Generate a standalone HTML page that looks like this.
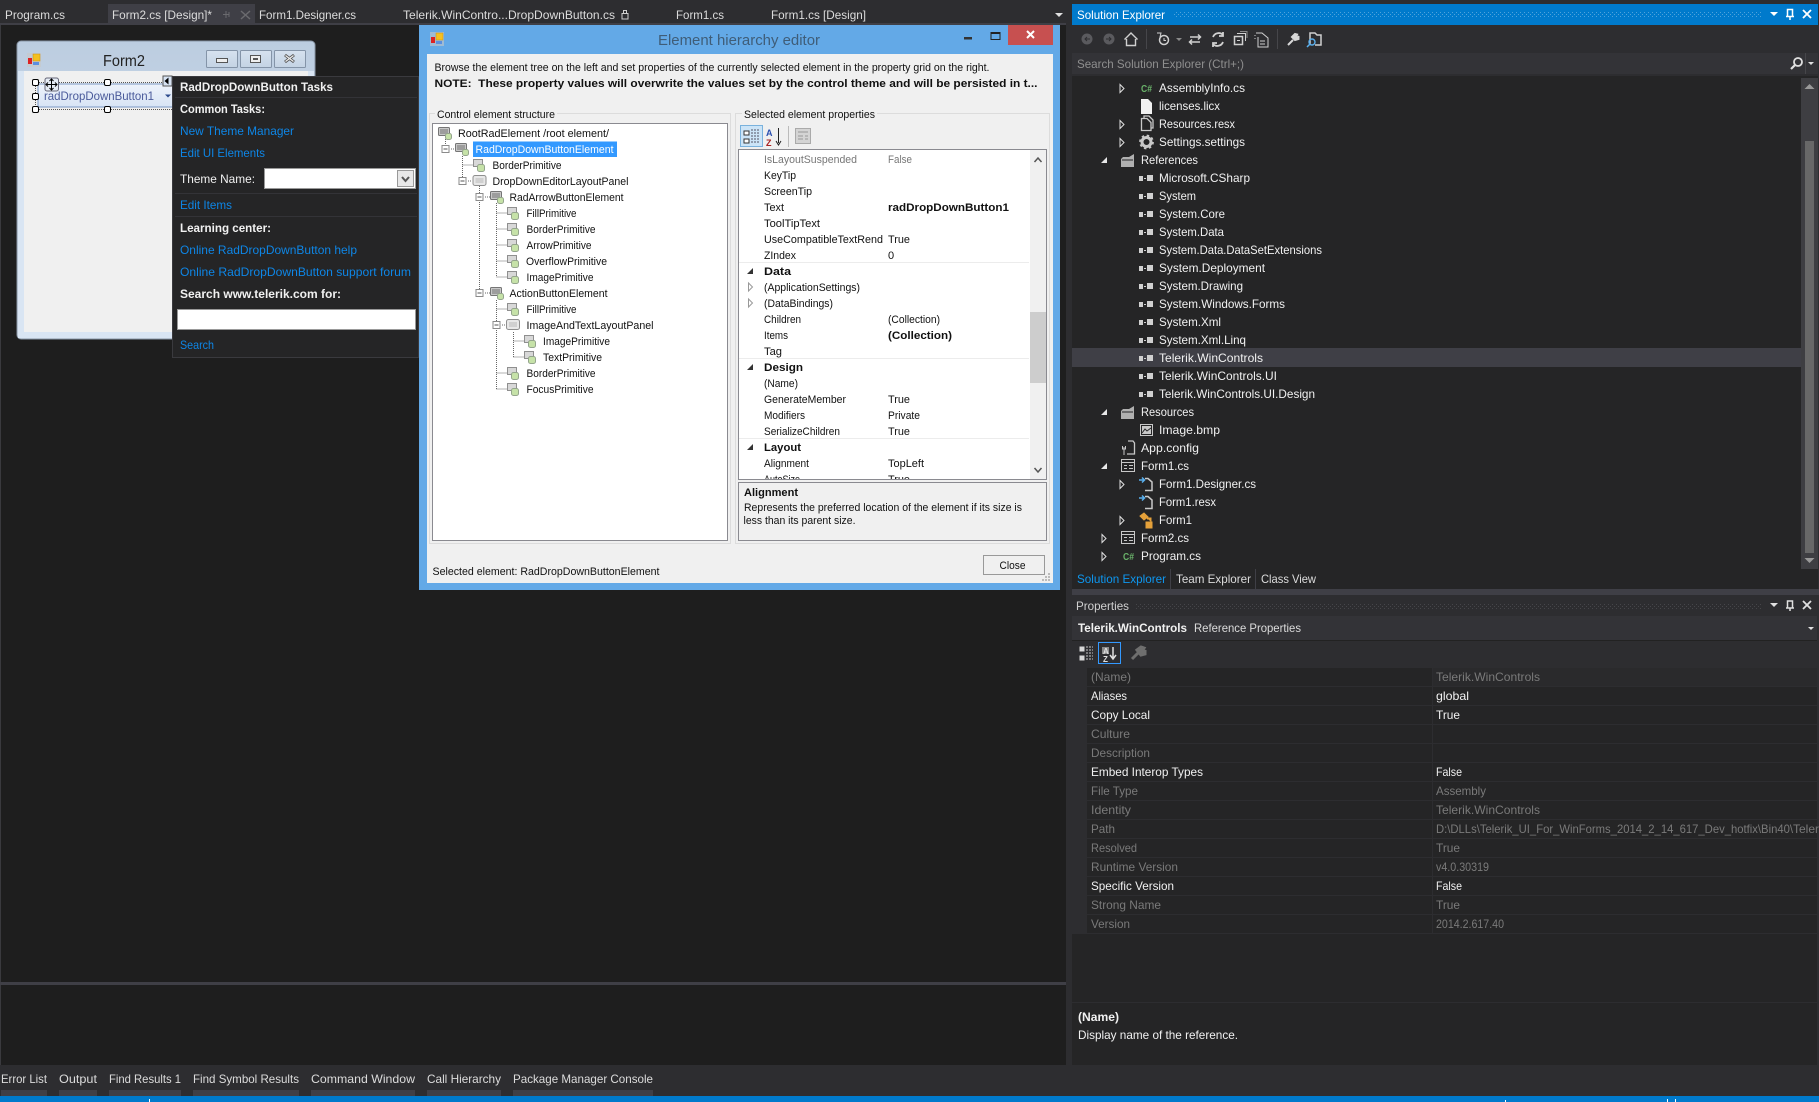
<!DOCTYPE html>
<html lang="en"><head><meta charset="utf-8"><title>Visual Studio - Element hierarchy editor</title>
<style>
html,body{margin:0;padding:0;background:#1e1e1e;width:1819px;height:1102px;overflow:hidden}
svg{position:absolute;left:0;top:0;display:block}
text{font-family:"Liberation Sans",sans-serif;font-size:12px;white-space:pre}
.w{fill:#f1f1f1}.l{fill:#dcdcdc}.g{fill:#7c7c7c}.b{font-weight:bold}.lnk{fill:#0e86e6}
.d text,text.dk{font-size:11px;fill:#111}
.pg{fill:#7a7a7a}
</style></head><body>
<svg width="1819" height="1102" viewBox="0 0 1819 1102" xmlns="http://www.w3.org/2000/svg">
<defs>
<pattern id="dotB" width="4" height="4" patternUnits="userSpaceOnUse"><rect width="1" height="1" fill="#4fa3dc"/><rect x="2" y="2" width="1" height="1" fill="#4fa3dc"/></pattern>
<pattern id="dotG" width="4" height="4" patternUnits="userSpaceOnUse"><rect width="1" height="1" fill="#46464a"/><rect x="2" y="2" width="1" height="1" fill="#46464a"/></pattern>
<linearGradient id="ft" x1="0" y1="0" x2="0" y2="1"><stop offset="0" stop-color="#bccde0"/><stop offset="1" stop-color="#d9e5f3"/></linearGradient>
<linearGradient id="fb" x1="0" y1="0" x2="0" y2="1"><stop offset="0" stop-color="#d6e2ef"/><stop offset="1" stop-color="#c4d3e4"/></linearGradient>
<linearGradient id="bt" x1="0" y1="0" x2="0" y2="1"><stop offset="0" stop-color="#eef3fb"/><stop offset="1" stop-color="#d8e4f5"/></linearGradient>
<symbol id="ref" width="16" height="8" overflow="visible"><rect x="0" y="1" width="4" height="5" fill="#d0d0d0"/><rect x="5" y="3" width="2" height="1" fill="#d0d0d0"/><rect x="8" y="0" width="6" height="6" fill="#d0d0d0"/></symbol>
<symbol id="tri" width="8" height="10" overflow="visible"><path d="M1 0.5V8.5L5 4.5Z" fill="none" stroke="#e0e0e0"/></symbol>
<symbol id="sol" width="8" height="8" overflow="visible"><path d="M0 6H6V0Z" fill="#e8e8e8"/></symbol>
<symbol id="fold" width="16" height="14" overflow="visible"><path d="M0 13V5L2 3H8L13 0V13Z" fill="#c0c0c0" opacity=".9"/><path d="M1 6H12" stroke="#252526"/></symbol>
<symbol id="frm" width="16" height="14" overflow="visible"><rect x=".5" y=".5" width="13" height="12" fill="none" stroke="#c8c8c8"/><path d="M1 3.500H13M3 6.500H6M3 9.500H6M8 6.500H12M8 9.500H12" stroke="#c8c8c8"/></symbol>
<symbol id="des" width="16" height="14" overflow="visible"><path d="M6 1.500H9L13 5V13.500H6" fill="none" stroke="#c8c8c8" stroke-width="1.500"/><path d="M0 3H5M3 0.500L5.500 3L3 5.500" fill="none" stroke="#5ab0ee" stroke-width="1.500"/></symbol>
<symbol id="prim" width="14" height="14" overflow="visible"><rect x=".5" y="1.500" width="9" height="7" fill="#d8d8d8" stroke="#8f8f8f"/><rect x="4.500" y="6.500" width="7" height="7" rx="2" fill="#c6e2a8" stroke="#94a58c"/></symbol>
<symbol id="elem" width="14" height="14" overflow="visible"><rect x=".5" y="1.500" width="11" height="8" rx="1" fill="#c8c8c8" stroke="#757575"/><rect x="2" y="3" width="8" height="5" fill="#9d9d9d"/><rect x="7.500" y="7.500" width="6" height="6" rx="2" fill="#c6e2a8" stroke="#94a58c"/></symbol>
<symbol id="pan" width="14" height="14" overflow="visible"><rect x=".5" y="1.500" width="13" height="10" rx="2" fill="#e8e8e8" stroke="#8f8f8f"/><rect x="3" y="4" width="8" height="5" fill="#d0d0d0"/></symbol>
<symbol id="minus" width="9" height="9" overflow="visible"><rect x=".5" y=".5" width="7" height="7" fill="#fff" stroke="#8a8a8a"/><path d="M2 4H6" stroke="#555"/></symbol>
<symbol id="ico" width="14" height="14" overflow="visible"><rect x="0" y="0" width="14" height="14" fill="#c8c8c8" opacity=".6"/><rect x="6" y="1" width="7" height="7" fill="#f4c020" stroke="#c89010" stroke-width=".5"/><rect x="1" y="5" width="4" height="6" fill="#d22"/><rect x="6" y="9" width="6" height="3" fill="#5b8fe0"/></symbol>
</defs>

<!-- base -->
<rect width="1819" height="1102" fill="#2d2d30"/>
<!-- document tabs -->
<rect x="0" y="23" width="1066" height="2" fill="#3f3f46"/>
<rect x="108" y="4" width="147" height="20" fill="#3f3f46"/>
<text class="l" x="5" y="19" textLength="60" lengthAdjust="spacingAndGlyphs">Program.cs</text>
<text class="l" x="112" y="19" textLength="100" lengthAdjust="spacingAndGlyphs">Form2.cs [Design]*</text>
<path d="M226 11V18M223 14.500H229M229 12V17" stroke="#6a6a6e" fill="none"/>
<path d="M241 11L250 19M250 11L241 19" stroke="#6a6a6e" stroke-width="1.500"/>
<text class="l" x="259" y="19" textLength="97" lengthAdjust="spacingAndGlyphs">Form1.Designer.cs</text>
<text class="l" x="403" y="19" textLength="212" lengthAdjust="spacingAndGlyphs">Telerik.WinContro...DropDownButton.cs</text>
<path d="M622 13.500H628V19H622ZM623.500 13V10.500H626.500V13" fill="none" stroke="#d0d0d0"/>
<text class="l" x="676" y="19" textLength="48" lengthAdjust="spacingAndGlyphs">Form1.cs</text>
<text class="l" x="771" y="19" textLength="95" lengthAdjust="spacingAndGlyphs">Form1.cs [Design]</text>
<path d="M1055 13H1063L1059 17Z" fill="#e0e0e0"/>

<!-- document area -->
<rect x="1" y="25" width="1065" height="957" fill="#1e1e1e"/>
<rect x="0" y="25" width="1" height="1040" fill="#3a3a3e"/>
<rect x="0" y="982" width="1066" height="3" fill="#3f3f46"/>
<rect x="1" y="985" width="1065" height="80" fill="#1e1e1e"/>

<!-- Form2 designer -->
<rect x="17" y="41" width="298" height="298" rx="4" fill="url(#ft)" stroke="#8996a6"/>
<rect x="18" y="71" width="296" height="267" fill="#d9e5f3"/>
<rect x="24" y="71" width="284" height="261" fill="#f0f0f0"/>
<use href="#ico" x="27" y="53"/>
<text x="103" y="66" style="font-size:16px" fill="#222" textLength="42" lengthAdjust="spacingAndGlyphs">Form2</text>
<rect x="206.500" y="50.500" width="31" height="17" rx="1" fill="url(#fb)" stroke="#8494a8"/>
<rect x="240.500" y="50.500" width="31" height="17" rx="1" fill="url(#fb)" stroke="#8494a8"/>
<rect x="274.500" y="50.500" width="31" height="17" rx="1" fill="url(#fb)" stroke="#8494a8"/>
<rect x="216.500" y="58.500" width="11" height="4" fill="#eee" stroke="#555"/>
<rect x="250.500" y="55.500" width="10" height="7" fill="#eee" stroke="#555"/><rect x="253" y="58" width="5" height="2" fill="#555"/>
<path d="M285 55L294 62M294 55L285 62" stroke="#555" stroke-width="3"/><path d="M285.500 55.500L293.500 61.500M293.500 55.500L285.500 61.500" stroke="#eee" stroke-width="1.200"/>
<rect x="38" y="84" width="140" height="23" fill="url(#bt)" stroke="#7a97c5"/>
<text x="44" y="100" fill="#4a5a9a" textLength="110" lengthAdjust="spacingAndGlyphs">radDropDownButton1</text>
<path d="M165 94.500H171L168 97.500Z" fill="#2b4a8c"/>
<path d="M35 82.500H172M35 109.500H172M35.500 82V109" stroke="#555" stroke-dasharray="1 1" fill="none"/>
<g fill="#fff" stroke="#000"><rect x="32.500" y="79.500" width="6" height="6" rx="1.500"/><rect x="104.500" y="79.500" width="6" height="6" rx="1.500"/><rect x="32.500" y="93.500" width="6" height="6" rx="1.500"/><rect x="32.500" y="106.500" width="6" height="6" rx="1.500"/><rect x="104.500" y="106.500" width="6" height="6" rx="1.500"/></g>
<rect x="45" y="78" width="13.500" height="13" rx="2" fill="#e6ecf5" stroke="#667"/>
<path d="M51.500 79V90M46 84.500H57M49.500 81L51.500 79L53.500 81M49.500 88L51.500 90L53.500 88M48 82.500L46 84.500L48 86.500M55 82.500L57 84.500L55 86.500" stroke="#000" fill="none"/>
<rect x="163" y="76" width="9" height="10" fill="#d6e2f2" stroke="#555"/><path d="M168.500 77.500V84.500L164.500 81Z" fill="#000"/>

<!-- smart tag panel -->
<rect x="172.500" y="76.500" width="246" height="281" fill="#252526" stroke="#3a3a3e"/>
<path d="M175 97.500H417M175 193.500H417M175 216.500H417" stroke="#333337"/>
<text class="w b" x="180" y="91" textLength="153" lengthAdjust="spacingAndGlyphs">RadDropDownButton Tasks</text>
<text class="w b" x="180" y="113" textLength="85" lengthAdjust="spacingAndGlyphs">Common Tasks:</text>
<text class="lnk" x="180" y="135" textLength="114" lengthAdjust="spacingAndGlyphs">New Theme Manager</text>
<text class="lnk" x="180" y="157" textLength="85" lengthAdjust="spacingAndGlyphs">Edit UI Elements</text>
<text class="w" x="180" y="183" textLength="75" lengthAdjust="spacingAndGlyphs">Theme Name:</text>
<rect x="264.500" y="168.500" width="151" height="20" fill="#fff" stroke="#999"/>
<rect x="397.500" y="170.500" width="16" height="16" fill="#e8e8e8" stroke="#999"/><path d="M402 177L405.500 181L409 177" fill="none" stroke="#555" stroke-width="2"/>
<text class="lnk" x="180" y="209" textLength="52" lengthAdjust="spacingAndGlyphs">Edit Items</text>
<text class="w b" x="180" y="232" textLength="91" lengthAdjust="spacingAndGlyphs">Learning center:</text>
<text class="lnk" x="180" y="254" textLength="177" lengthAdjust="spacingAndGlyphs">Online RadDropDownButton help</text>
<text class="lnk" x="180" y="276" textLength="231" lengthAdjust="spacingAndGlyphs">Online RadDropDownButton support forum</text>
<text class="w b" x="180" y="298" textLength="161" lengthAdjust="spacingAndGlyphs">Search www.telerik.com for:</text>
<rect x="177.500" y="309.500" width="238" height="20" fill="#fff" stroke="#999"/>
<text class="lnk" x="180" y="349" textLength="34" lengthAdjust="spacingAndGlyphs">Search</text>

<!-- Element hierarchy dialog -->
<rect x="419" y="25" width="641" height="565" fill="#63a9e7"/>
<rect x="427" y="54" width="626" height="529" fill="#f0f0f0"/>
<use href="#ico" x="430" y="32"/>
<text x="658" y="45" style="font-size:15px" fill="#3f5d78" textLength="162" lengthAdjust="spacingAndGlyphs">Element hierarchy editor</text>
<rect x="964" y="37" width="8" height="2.500" fill="#333"/>
<rect x="991" y="32.500" width="9" height="7" fill="none" stroke="#222"/><rect x="991" y="32" width="9" height="2" fill="#222"/>
<rect x="1008" y="25" width="45" height="20" fill="#c75050"/>
<path d="M1027 31L1034 38M1034 31L1027 38" stroke="#fff" stroke-width="2"/>
<g class="d">
<text x="434.500" y="71" textLength="555" lengthAdjust="spacingAndGlyphs">Browse the element tree on the left and set properties of the currently selected element in the property grid on the right.</text>
<text class="b" x="434.500" y="87" textLength="603" lengthAdjust="spacingAndGlyphs" style="font-weight:bold">NOTE:  These property values will overwrite the values set by the control theme and will be persisted in t...</text>
<!-- group frames -->
<rect x="429.500" y="113.500" width="301" height="430" fill="none" stroke="#dcdcdc"/>
<rect x="735.500" y="113.500" width="314" height="430" fill="none" stroke="#dcdcdc"/>
<rect x="435" y="108" width="122" height="12" fill="#f0f0f0"/><rect x="742" y="108" width="135" height="12" fill="#f0f0f0"/>
<text x="437" y="118" textLength="118" lengthAdjust="spacingAndGlyphs">Control element structure</text>
<text x="744" y="118" textLength="131" lengthAdjust="spacingAndGlyphs">Selected element properties</text>
<!-- tree -->
<rect x="432.500" y="123.500" width="295" height="417" fill="#fff" stroke="#8a8a90"/>
<path d="M445.500 139V145M462.500 156V177M462.500 165H473M479.500 186V193M479.500 202V289M496.500 203V277M496.500 213H507M496.500 229H507M496.500 245H507M496.500 261H507M496.500 277H507M496.500 300V321M496.500 330V389M496.500 309H507M496.500 373H507M496.500 389H507M513.500 332V357M513.500 341H524M513.500 357H524" stroke="#666" stroke-dasharray="1 1" fill="none"/>
<path d="M451 149H455M468 181H472M485 197H490M485 293H490M502 325H506" stroke="#666" stroke-dasharray="1 1" fill="none"/>
<rect x="473" y="141.500" width="144" height="15.500" fill="#3399ff"/>
<use href="#elem" x="438" y="126"/><text x="458" y="137" textLength="151" lengthAdjust="spacingAndGlyphs">RootRadElement /root element/</text>
<use href="#minus" x="441.500" y="145"/><use href="#elem" x="455" y="142"/><text x="475.500" y="153" style="fill:#fff" textLength="138" lengthAdjust="spacingAndGlyphs">RadDropDownButtonElement</text>
<use href="#prim" x="473" y="158"/><text x="492.500" y="169" textLength="69" lengthAdjust="spacingAndGlyphs">BorderPrimitive</text>
<use href="#minus" x="458.500" y="177"/><use href="#pan" x="472.500" y="174"/><text x="492.500" y="185" textLength="136" lengthAdjust="spacingAndGlyphs">DropDownEditorLayoutPanel</text>
<use href="#minus" x="475.500" y="193"/><use href="#elem" x="490" y="190"/><text x="509.500" y="201" textLength="114" lengthAdjust="spacingAndGlyphs">RadArrowButtonElement</text>
<use href="#prim" x="507" y="206"/><text x="526.500" y="217" textLength="50" lengthAdjust="spacingAndGlyphs">FillPrimitive</text>
<use href="#prim" x="507" y="222"/><text x="526.500" y="233" textLength="69" lengthAdjust="spacingAndGlyphs">BorderPrimitive</text>
<use href="#prim" x="507" y="238"/><text x="526.500" y="249" textLength="65" lengthAdjust="spacingAndGlyphs">ArrowPrimitive</text>
<use href="#prim" x="507" y="254"/><text x="526" y="265" textLength="81" lengthAdjust="spacingAndGlyphs">OverflowPrimitive</text>
<use href="#prim" x="507" y="270"/><text x="526.500" y="281" textLength="67" lengthAdjust="spacingAndGlyphs">ImagePrimitive</text>
<use href="#minus" x="475.500" y="289"/><use href="#elem" x="490" y="286"/><text x="509.500" y="297" textLength="98" lengthAdjust="spacingAndGlyphs">ActionButtonElement</text>
<use href="#prim" x="507" y="302"/><text x="526.500" y="313" textLength="50" lengthAdjust="spacingAndGlyphs">FillPrimitive</text>
<use href="#minus" x="492.500" y="321"/><use href="#pan" x="506" y="318"/><text x="526.500" y="329" textLength="127" lengthAdjust="spacingAndGlyphs">ImageAndTextLayoutPanel</text>
<use href="#prim" x="524" y="334"/><text x="543" y="345" textLength="67" lengthAdjust="spacingAndGlyphs">ImagePrimitive</text>
<use href="#prim" x="524" y="350"/><text x="543" y="361" textLength="59" lengthAdjust="spacingAndGlyphs">TextPrimitive</text>
<use href="#prim" x="507" y="366"/><text x="526.500" y="377" textLength="69" lengthAdjust="spacingAndGlyphs">BorderPrimitive</text>
<use href="#prim" x="507" y="382"/><text x="526.500" y="393" textLength="67" lengthAdjust="spacingAndGlyphs">FocusPrimitive</text>
<!-- property grid toolbar -->
<rect x="740.500" y="125.500" width="22" height="21" fill="#cce4f7" stroke="#7ab2dd"/>
<path d="M744 131H749V135H744ZM744 139H749V143H744Z" fill="#fff" stroke="#333"/><path d="M751 130H759M751 133H759M751 136H759M751 139H759M751 142H759" stroke="#556" stroke-dasharray="2 1"/>
<text x="766" y="136" style="font-size:9px;font-weight:bold;fill:#2a4fb0">A</text><text x="766" y="146" style="font-size:9px;font-weight:bold;fill:#a82020">Z</text>
<path d="M778.500 128V143M776 141L778.500 145L781 141" stroke="#222" fill="none"/>
<rect x="788" y="126" width="1" height="21" fill="#bbb"/>
<rect x="795.500" y="128.500" width="15" height="15" fill="#d4d4d4" stroke="#aaa"/><path d="M798 132H808M798 136H803M805 136H808M798 139H803M805 139H808" stroke="#999"/>
<!-- property grid -->
<rect x="738.500" y="149.500" width="308" height="330" fill="#fff" stroke="#8a8a90"/>
<path d="M739 262.500H1029M739 358.500H1029M739 438.500H1029" stroke="#ececec"/>
<text x="764" y="163" style="fill:#777" textLength="93" lengthAdjust="spacingAndGlyphs">IsLayoutSuspended</text><text x="888" y="163" style="fill:#777" textLength="24" lengthAdjust="spacingAndGlyphs">False</text>
<text x="764" y="179" textLength="32" lengthAdjust="spacingAndGlyphs">KeyTip</text>
<text x="764" y="195" textLength="48" lengthAdjust="spacingAndGlyphs">ScreenTip</text>
<text x="764" y="211" textLength="20" lengthAdjust="spacingAndGlyphs">Text</text><text x="888" y="211" style="font-weight:bold" textLength="121" lengthAdjust="spacingAndGlyphs">radDropDownButton1</text>
<text x="764" y="227" textLength="56" lengthAdjust="spacingAndGlyphs">ToolTipText</text>
<text x="764" y="243" textLength="119" lengthAdjust="spacingAndGlyphs">UseCompatibleTextRend</text><text x="888" y="243" textLength="22" lengthAdjust="spacingAndGlyphs">True</text>
<text x="764" y="259" textLength="32" lengthAdjust="spacingAndGlyphs">ZIndex</text><text x="888" y="259">0</text>
<path d="M747 274H753V268Z" fill="#333"/><text x="764" y="275" style="font-weight:bold" textLength="27" lengthAdjust="spacingAndGlyphs">Data</text>
<path d="M748.500 283V291L752.500 287Z" fill="none" stroke="#999"/><text x="764" y="291" textLength="96" lengthAdjust="spacingAndGlyphs">(ApplicationSettings)</text>
<path d="M748.500 299V307L752.500 303Z" fill="none" stroke="#999"/><text x="764" y="307" textLength="69" lengthAdjust="spacingAndGlyphs">(DataBindings)</text>
<text x="764" y="323" textLength="37" lengthAdjust="spacingAndGlyphs">Children</text><text x="888" y="323" textLength="52" lengthAdjust="spacingAndGlyphs">(Collection)</text>
<text x="764" y="339" textLength="24" lengthAdjust="spacingAndGlyphs">Items</text><text x="888" y="339" style="font-weight:bold" textLength="64" lengthAdjust="spacingAndGlyphs">(Collection)</text>
<text x="764" y="355" textLength="18" lengthAdjust="spacingAndGlyphs">Tag</text>
<path d="M747 370H753V364Z" fill="#333"/><text x="764" y="371" style="font-weight:bold" textLength="39" lengthAdjust="spacingAndGlyphs">Design</text>
<text x="764" y="387" textLength="34" lengthAdjust="spacingAndGlyphs">(Name)</text>
<text x="764" y="403" textLength="82" lengthAdjust="spacingAndGlyphs">GenerateMember</text><text x="888" y="403" textLength="22" lengthAdjust="spacingAndGlyphs">True</text>
<text x="764" y="419" textLength="41" lengthAdjust="spacingAndGlyphs">Modifiers</text><text x="888" y="419" textLength="32" lengthAdjust="spacingAndGlyphs">Private</text>
<text x="764" y="435" textLength="76" lengthAdjust="spacingAndGlyphs">SerializeChildren</text><text x="888" y="435" textLength="22" lengthAdjust="spacingAndGlyphs">True</text>
<path d="M747 450H753V444Z" fill="#333"/><text x="764" y="451" style="font-weight:bold" textLength="37" lengthAdjust="spacingAndGlyphs">Layout</text>
<text x="764" y="467" textLength="45" lengthAdjust="spacingAndGlyphs">Alignment</text><text x="888" y="467" textLength="36" lengthAdjust="spacingAndGlyphs">TopLeft</text>
<text x="764" y="483" textLength="36" lengthAdjust="spacingAndGlyphs">AutoSize</text><text x="888" y="483" textLength="22" lengthAdjust="spacingAndGlyphs">True</text>
<rect x="1030" y="150" width="16" height="329" fill="#f0f0f0"/>
<rect x="1030" y="312" width="16" height="71" fill="#cdcdcd"/>
<path d="M1034.500 162L1038 158L1041.500 162" fill="none" stroke="#555" stroke-width="1.500"/>
<path d="M1034.500 468L1038 472L1041.500 468" fill="none" stroke="#555" stroke-width="1.500"/>
<rect x="738" y="479" width="310" height="3" fill="#f0f0f0"/>
<rect x="738" y="479" width="309" height="1" fill="#8a8a90"/>
<rect x="738.500" y="482.500" width="308" height="58" fill="#f0f0f0" stroke="#8a8a90"/>
<text x="744" y="496" style="font-weight:bold" textLength="54" lengthAdjust="spacingAndGlyphs">Alignment</text>
<text x="744" y="511" textLength="278" lengthAdjust="spacingAndGlyphs">Represents the preferred location of the element if its size is</text>
<text x="743.500" y="524" textLength="112" lengthAdjust="spacingAndGlyphs">less than its parent size.</text>
<text x="432.500" y="575" textLength="227" lengthAdjust="spacingAndGlyphs">Selected element: RadDropDownButtonElement</text>
<rect x="983.500" y="555.500" width="61" height="19" fill="#f0f0f0" stroke="#999"/>
<text x="999.500" y="569" textLength="26" lengthAdjust="spacingAndGlyphs">Close</text>
<path d="M1048 573h2v2h-2zM1045 576h2v2h-2zM1048 576h2v2h-2zM1042 579h2v2h-2zM1045 579h2v2h-2zM1048 579h2v2h-2z" fill="#bbb"/>
</g>

<!-- Solution Explorer -->
<rect x="1072" y="4" width="746" height="21" fill="#007acc"/>
<rect x="1174" y="12" width="588" height="6" fill="url(#dotB)"/>
<text x="1077" y="19" fill="#fff" textLength="88" lengthAdjust="spacingAndGlyphs">Solution Explorer</text>
<path d="M1770 12H1778L1774 16Z" fill="#fff"/>
<path d="M1787.500 9.500H1792.500V16.500H1787.500ZM1786 16.500H1794M1790 17V20" fill="none" stroke="#fff" stroke-width="1.500"/>
<path d="M1803 10L1811 18M1811 10L1803 18" stroke="#fff" stroke-width="1.800"/>
<!-- toolbar -->
<circle cx="1087" cy="39" r="5.500" fill="#5a5a5e"/><path d="M1090 39H1085M1087 37L1085 39L1087 41" stroke="#2d2d30" fill="none"/>
<circle cx="1109" cy="39" r="5.500" fill="#5a5a5e"/><path d="M1106 39H1111M1109 37L1111 39L1109 41" stroke="#2d2d30" fill="none"/>
<path d="M1124.500 39.500L1131 33L1137.500 39.500M1126.500 39V45.500H1135.500V39" fill="none" stroke="#d0d0d0" stroke-width="1.400"/>
<rect x="1146" y="29" width="1" height="20" fill="#46464a"/>
<circle cx="1164" cy="40" r="4.500" fill="none" stroke="#d0d0d0" stroke-width="1.500"/><path d="M1157 33H1161L1160 37M1164 38V40.500H1166" fill="none" stroke="#d0d0d0"/>
<path d="M1176 38H1182L1179 41Z" fill="#8a8a8a"/>
<path d="M1190 37H1200M1198 34.500L1200.500 37L1198 39.500M1200 42H1190M1192 39.500L1189.500 42L1192 44.500" fill="none" stroke="#d0d0d0" stroke-width="1.500"/>
<path d="M1213 37A6 6 0 0 1 1223 35M1223 42A6 6 0 0 1 1213 44M1223 32V36H1219M1213 47V43H1217" fill="none" stroke="#d0d0d0" stroke-width="1.800"/>
<rect x="1234.500" y="36.500" width="8" height="8" fill="none" stroke="#d0d0d0" stroke-width="1.500"/><path d="M1237 33.500H1245.500V41M1240 40.500H1237" fill="none" stroke="#d0d0d0"/><path d="M1240 31.500H1247V38" fill="none" stroke="#8a8a8a"/>
<path d="M1256 33H1262L1268 38V47H1258V37" fill="none" stroke="#d0d0d0"/><path d="M1255 35V36M1255 38V39M1260 41H1265M1260 44H1265" stroke="#d0d0d0"/>
<rect x="1277" y="29" width="1" height="20" fill="#46464a"/>
<path d="M1288 45L1293 40M1292 37L1295 34L1297 34.500L1295.500 37L1297.500 38L1298.500 36V39L1295 40Z" stroke="#d8d8d8" stroke-width="2" fill="#d8d8d8"/>
<path d="M1310 44V33H1315L1317 35H1321V45H1315" fill="none" stroke="#d0d0d0" stroke-width="1.500"/><circle cx="1312" cy="42" r="3" fill="none" stroke="#5ab0ee" stroke-width="1.400"/><path d="M1310 44L1307 47" stroke="#5ab0ee" stroke-width="1.500"/>
<!-- search -->
<rect x="1072" y="53" width="746" height="21" fill="#333337"/>
<text x="1077" y="68" fill="#8f8f8f" textLength="167" lengthAdjust="spacingAndGlyphs">Search Solution Explorer (Ctrl+;)</text>
<circle cx="1798" cy="62" r="4" fill="none" stroke="#e0e0e0" stroke-width="1.800"/><path d="M1795 65L1791 69" stroke="#e0e0e0" stroke-width="2.200"/>
<rect x="1805" y="53" width="1" height="21" fill="#46464a"/>
<path d="M1808 62H1814L1811 65Z" fill="#e0e0e0"/>
<!-- tree -->
<rect x="1072" y="76" width="746" height="493" fill="#252526"/>
<rect x="1072" y="348" width="729" height="19" fill="#3f3f46"/>
<rect x="1801" y="78" width="17" height="491" fill="#3e3e42"/>
<rect x="1805" y="141" width="9" height="412" fill="#686868"/>
<path d="M1804.500 89L1809.500 84L1814.500 89Z" fill="#999"/>
<path d="M1804.500 558L1809.500 563L1814.500 558Z" fill="#999"/>

<use href="#tri" x="1119" y="84"/><text x="1141" y="92" style="font-size:10px;font-weight:bold" fill="#6ab26a" textLength="11" lengthAdjust="spacingAndGlyphs">C#</text><text class="w" x="1159" y="92" textLength="86" lengthAdjust="spacingAndGlyphs">AssemblyInfo.cs</text>
<path d="M1141 99H1148L1152 103V114H1141Z" fill="#f1f1f1"/><text class="w" x="1159" y="110" textLength="61" lengthAdjust="spacingAndGlyphs">licenses.licx</text>
<use href="#tri" x="1119" y="120"/><path d="M1141.500 118.500H1147L1151 122.500V130.500H1141.500ZM1144 118V116H1149L1153 120V128H1151" fill="none" stroke="#c8c8c8" stroke-width="1.300"/><text class="w" x="1159" y="128" textLength="76" lengthAdjust="spacingAndGlyphs">Resources.resx</text>
<use href="#tri" x="1119" y="138"/><circle cx="1146.500" cy="142" r="4.500" fill="none" stroke="#c8c8c8" stroke-width="3"/><circle cx="1146.500" cy="142" r="6.500" fill="none" stroke="#c8c8c8" stroke-width="1.800" stroke-dasharray="2.500 2.600"/><text class="w" x="1159" y="146" textLength="86" lengthAdjust="spacingAndGlyphs">Settings.settings</text>
<use href="#sol" x="1101" y="157"/><use href="#fold" x="1121" y="154"/><text class="w" x="1141" y="164" textLength="57" lengthAdjust="spacingAndGlyphs">References</text>
<use href="#ref" x="1139" y="175"/><text class="w" x="1159" y="182" textLength="91" lengthAdjust="spacingAndGlyphs">Microsoft.CSharp</text>
<use href="#ref" x="1139" y="193"/><text class="w" x="1159" y="200" textLength="37" lengthAdjust="spacingAndGlyphs">System</text>
<use href="#ref" x="1139" y="211"/><text class="w" x="1159" y="218" textLength="66" lengthAdjust="spacingAndGlyphs">System.Core</text>
<use href="#ref" x="1139" y="229"/><text class="w" x="1159" y="236" textLength="65" lengthAdjust="spacingAndGlyphs">System.Data</text>
<use href="#ref" x="1139" y="247"/><text class="w" x="1159" y="254" textLength="163" lengthAdjust="spacingAndGlyphs">System.Data.DataSetExtensions</text>
<use href="#ref" x="1139" y="265"/><text class="w" x="1159" y="272" textLength="106" lengthAdjust="spacingAndGlyphs">System.Deployment</text>
<use href="#ref" x="1139" y="283"/><text class="w" x="1159" y="290" textLength="84" lengthAdjust="spacingAndGlyphs">System.Drawing</text>
<use href="#ref" x="1139" y="301"/><text class="w" x="1159" y="308" textLength="126" lengthAdjust="spacingAndGlyphs">System.Windows.Forms</text>
<use href="#ref" x="1139" y="319"/><text class="w" x="1159" y="326" textLength="62" lengthAdjust="spacingAndGlyphs">System.Xml</text>
<use href="#ref" x="1139" y="337"/><text class="w" x="1159" y="344" textLength="87" lengthAdjust="spacingAndGlyphs">System.Xml.Linq</text>
<use href="#ref" x="1139" y="355"/><text class="w" x="1159" y="362" textLength="104" lengthAdjust="spacingAndGlyphs">Telerik.WinControls</text>
<use href="#ref" x="1139" y="373"/><text class="w" x="1159" y="380" textLength="118" lengthAdjust="spacingAndGlyphs">Telerik.WinControls.UI</text>
<use href="#ref" x="1139" y="391"/><text class="w" x="1159" y="398" textLength="156" lengthAdjust="spacingAndGlyphs">Telerik.WinControls.UI.Design</text>
<use href="#sol" x="1101" y="409"/><use href="#fold" x="1121" y="406"/><text class="w" x="1141" y="416" textLength="53" lengthAdjust="spacingAndGlyphs">Resources</text>
<rect x="1140" y="424" width="13" height="12" fill="#c8c8c8"/><path d="M1142 433L1145 429L1147 431L1151 428" stroke="#252526" fill="none"/><rect x="1141.500" y="425.500" width="10" height="9" fill="none" stroke="#252526"/><text class="w" x="1159" y="434" textLength="61" lengthAdjust="spacingAndGlyphs">Image.bmp</text>
<path d="M1128 441H1133L1134.500 443V454H1127" fill="none" stroke="#c8c8c8" stroke-width="1.300"/><path d="M1124 447V451M1122.500 446V449H1125.500V446M1124 451V455" stroke="#c8c8c8" fill="none"/><text class="w" x="1141" y="452" textLength="58" lengthAdjust="spacingAndGlyphs">App.config</text>
<use href="#sol" x="1101" y="463"/><use href="#frm" x="1121" y="459"/><text class="w" x="1141" y="470" textLength="48" lengthAdjust="spacingAndGlyphs">Form1.cs</text>
<use href="#tri" x="1119" y="480"/><use href="#des" x="1139" y="477"/><text class="w" x="1159" y="488" textLength="97" lengthAdjust="spacingAndGlyphs">Form1.Designer.cs</text>
<use href="#des" x="1139" y="495"/><text class="w" x="1159" y="506" textLength="57" lengthAdjust="spacingAndGlyphs">Form1.resx</text>
<use href="#tri" x="1119" y="516"/><path d="M1140 516L1144 513L1148 517L1144 520ZM1146 522H1152V528H1146ZM1147 518H1151V522M1147 519H1150" fill="#e5a13a" stroke="#e5a13a"/><text class="w" x="1159" y="524" textLength="33" lengthAdjust="spacingAndGlyphs">Form1</text>
<use href="#tri" x="1101" y="534"/><use href="#frm" x="1121" y="531"/><text class="w" x="1141" y="542" textLength="48" lengthAdjust="spacingAndGlyphs">Form2.cs</text>
<use href="#tri" x="1101" y="552"/><text x="1123" y="560" style="font-size:10px;font-weight:bold" fill="#6ab26a" textLength="11" lengthAdjust="spacingAndGlyphs">C#</text><text class="w" x="1141" y="560" textLength="60" lengthAdjust="spacingAndGlyphs">Program.cs</text>

<!-- tool tabs -->
<rect x="1072" y="569" width="746" height="20" fill="#252526"/>
<rect x="1170" y="569" width="1" height="20" fill="#3f3f46"/><rect x="1255" y="569" width="1" height="20" fill="#3f3f46"/>
<text x="1077" y="583" fill="#0e97f0" textLength="89" lengthAdjust="spacingAndGlyphs">Solution Explorer</text>
<text class="l" x="1176" y="583" textLength="75" lengthAdjust="spacingAndGlyphs">Team Explorer</text>
<text class="l" x="1261" y="583" textLength="55" lengthAdjust="spacingAndGlyphs">Class View</text>
<rect x="1072" y="589" width="747" height="6" fill="#3f3f46"/>

<!-- Properties -->
<rect x="1136" y="603" width="626" height="6" fill="url(#dotG)"/>
<text x="1076" y="610" fill="#d0d0d0" textLength="53" lengthAdjust="spacingAndGlyphs">Properties</text>
<path d="M1770 603H1778L1774 607Z" fill="#e0e0e0"/>
<path d="M1787.500 601H1792.500V608H1787.500ZM1786 608H1794M1790 608V611" fill="none" stroke="#e0e0e0" stroke-width="1.500"/>
<path d="M1803 601L1811 609M1811 601L1803 609" stroke="#e0e0e0" stroke-width="1.800"/>
<rect x="1072" y="616" width="745" height="24" fill="#333337"/>
<rect x="1072" y="640" width="745" height="1" fill="#222"/>
<text class="w b" x="1078" y="632" textLength="109" lengthAdjust="spacingAndGlyphs">Telerik.WinControls</text>
<text class="l" x="1194" y="632" textLength="107" lengthAdjust="spacingAndGlyphs">Reference Properties</text>
<path d="M1808 627H1814L1811 630Z" fill="#e0e0e0"/>
<path d="M1079.500 646.500H1084.500V651.500H1079.500ZM1079.500 655.500H1084.500V660.500H1079.500Z" fill="#d8d8d8"/><path d="M1086 647H1093M1086 650H1093M1086 653H1093M1086 656H1093M1086 659H1093" stroke="#c8c8c8" stroke-dasharray="2 1"/>
<rect x="1098.500" y="642.500" width="22" height="21" fill="#2d2d30" stroke="#3399ff"/>
<rect x="1102" y="647" width="7" height="7" fill="#8a8a8a"/>
<text x="1103" y="654" style="font-size:8px;font-weight:bold" fill="#e0e0e0">A</text><text x="1103" y="662" style="font-size:8px;font-weight:bold" fill="#e0e0e0">Z</text>
<path d="M1113 647V658M1110 655L1113 659L1116 655" stroke="#e0e0e0" stroke-width="1.500" fill="none"/>
<path d="M1132 659L1138 653M1137 650L1141 647L1144 648L1142 651L1144 653L1145 650V654L1141 655Z" stroke="#6e6e6e" stroke-width="3" fill="#6e6e6e"/>
<!-- grid -->
<rect x="1072" y="668" width="745" height="397" fill="#252526"/>
<rect x="1072" y="668" width="15" height="266" fill="#2d2d30"/>
<rect x="1433" y="668" width="384" height="19" fill="#2a2a2c"/>
<g fill="#2d2d30"><rect x="1087" y="686" width="730" height="1"/><rect x="1087" y="705" width="730" height="1"/><rect x="1087" y="724" width="730" height="1"/><rect x="1087" y="743" width="730" height="1"/><rect x="1087" y="762" width="730" height="1"/><rect x="1087" y="781" width="730" height="1"/><rect x="1087" y="800" width="730" height="1"/><rect x="1087" y="819" width="730" height="1"/><rect x="1087" y="838" width="730" height="1"/><rect x="1087" y="857" width="730" height="1"/><rect x="1087" y="876" width="730" height="1"/><rect x="1087" y="895" width="730" height="1"/><rect x="1087" y="914" width="730" height="1"/><rect x="1087" y="933" width="730" height="1"/><rect x="1432" y="668" width="1" height="266"/><rect x="1072" y="1002" width="745" height="1"/></g>
<text class="pg" x="1091" y="681" textLength="40" lengthAdjust="spacingAndGlyphs">(Name)</text><text class="pg" x="1436" y="681" textLength="104" lengthAdjust="spacingAndGlyphs">Telerik.WinControls</text>
<text class="w" x="1091" y="700" textLength="36" lengthAdjust="spacingAndGlyphs">Aliases</text><text class="w" x="1436" y="700" textLength="33" lengthAdjust="spacingAndGlyphs">global</text>
<text class="w" x="1091" y="719" textLength="59" lengthAdjust="spacingAndGlyphs">Copy Local</text><text class="w" x="1436" y="719" textLength="24" lengthAdjust="spacingAndGlyphs">True</text>
<text class="pg" x="1091" y="738" textLength="39" lengthAdjust="spacingAndGlyphs">Culture</text>
<text class="pg" x="1091" y="757" textLength="59" lengthAdjust="spacingAndGlyphs">Description</text>
<text class="w" x="1091" y="776" textLength="112" lengthAdjust="spacingAndGlyphs">Embed Interop Types</text><text class="w" x="1436" y="776" textLength="26" lengthAdjust="spacingAndGlyphs">False</text>
<text class="pg" x="1091" y="795" textLength="47" lengthAdjust="spacingAndGlyphs">File Type</text><text class="pg" x="1436" y="795" textLength="50" lengthAdjust="spacingAndGlyphs">Assembly</text>
<text class="pg" x="1091" y="814" textLength="40" lengthAdjust="spacingAndGlyphs">Identity</text><text class="pg" x="1436" y="814" textLength="104" lengthAdjust="spacingAndGlyphs">Telerik.WinControls</text>
<text class="pg" x="1091" y="833" textLength="24" lengthAdjust="spacingAndGlyphs">Path</text><text class="pg" x="1436" y="833" textLength="357" lengthAdjust="spacingAndGlyphs">D:\DLLs\Telerik_UI_For_WinForms_2014_2_14_617_Dev_hotfix\Bin40\</text><text class="pg" x="1793" y="833">Telerik.WinControls.dll</text>
<text class="pg" x="1091" y="852" textLength="46" lengthAdjust="spacingAndGlyphs">Resolved</text><text class="pg" x="1436" y="852" textLength="24" lengthAdjust="spacingAndGlyphs">True</text>
<text class="pg" x="1091" y="871" textLength="87" lengthAdjust="spacingAndGlyphs">Runtime Version</text><text class="pg" x="1436" y="871" textLength="53" lengthAdjust="spacingAndGlyphs">v4.0.30319</text>
<text class="w" x="1091" y="890" textLength="83" lengthAdjust="spacingAndGlyphs">Specific Version</text><text class="w" x="1436" y="890" textLength="26" lengthAdjust="spacingAndGlyphs">False</text>
<text class="pg" x="1091" y="909" textLength="70" lengthAdjust="spacingAndGlyphs">Strong Name</text><text class="pg" x="1436" y="909" textLength="24" lengthAdjust="spacingAndGlyphs">True</text>
<text class="pg" x="1091" y="928" textLength="39" lengthAdjust="spacingAndGlyphs">Version</text><text class="pg" x="1436" y="928" textLength="68" lengthAdjust="spacingAndGlyphs">2014.2.617.40</text>
<text class="w b" x="1078" y="1021" textLength="41" lengthAdjust="spacingAndGlyphs">(Name)</text>
<text class="w" x="1078" y="1039" textLength="160" lengthAdjust="spacingAndGlyphs">Display name of the reference.</text>

<!-- bottom tabs -->
<text class="l" x="1" y="1083" textLength="46" lengthAdjust="spacingAndGlyphs">Error List</text>
<text class="l" x="59" y="1083" textLength="38" lengthAdjust="spacingAndGlyphs">Output</text>
<text class="l" x="109" y="1083" textLength="72" lengthAdjust="spacingAndGlyphs">Find Results 1</text>
<text class="l" x="193" y="1083" textLength="106" lengthAdjust="spacingAndGlyphs">Find Symbol Results</text>
<text class="l" x="311" y="1083" textLength="104" lengthAdjust="spacingAndGlyphs">Command Window</text>
<text class="l" x="427" y="1083" textLength="74" lengthAdjust="spacingAndGlyphs">Call Hierarchy</text>
<text class="l" x="513" y="1083" textLength="140" lengthAdjust="spacingAndGlyphs">Package Manager Console</text>
<g fill="#3f3f46"><rect x="1" y="1090" width="46" height="6"/><rect x="59" y="1090" width="38" height="6"/><rect x="109" y="1090" width="72" height="6"/><rect x="193" y="1090" width="106" height="6"/><rect x="311" y="1090" width="104" height="6"/><rect x="427" y="1090" width="74" height="6"/><rect x="513" y="1090" width="140" height="6"/></g>
<!-- status -->
<rect x="0" y="1096" width="1819" height="6" fill="#007acc"/>
<rect x="149" y="1099" width="1" height="3" fill="#fff"/>
<rect x="1505" y="1100" width="1" height="2" fill="#fff"/><rect x="1667" y="1099" width="1" height="3" fill="#fff"/><rect x="1675" y="1099" width="1" height="3" fill="#fff"/>
</svg>
</body></html>
